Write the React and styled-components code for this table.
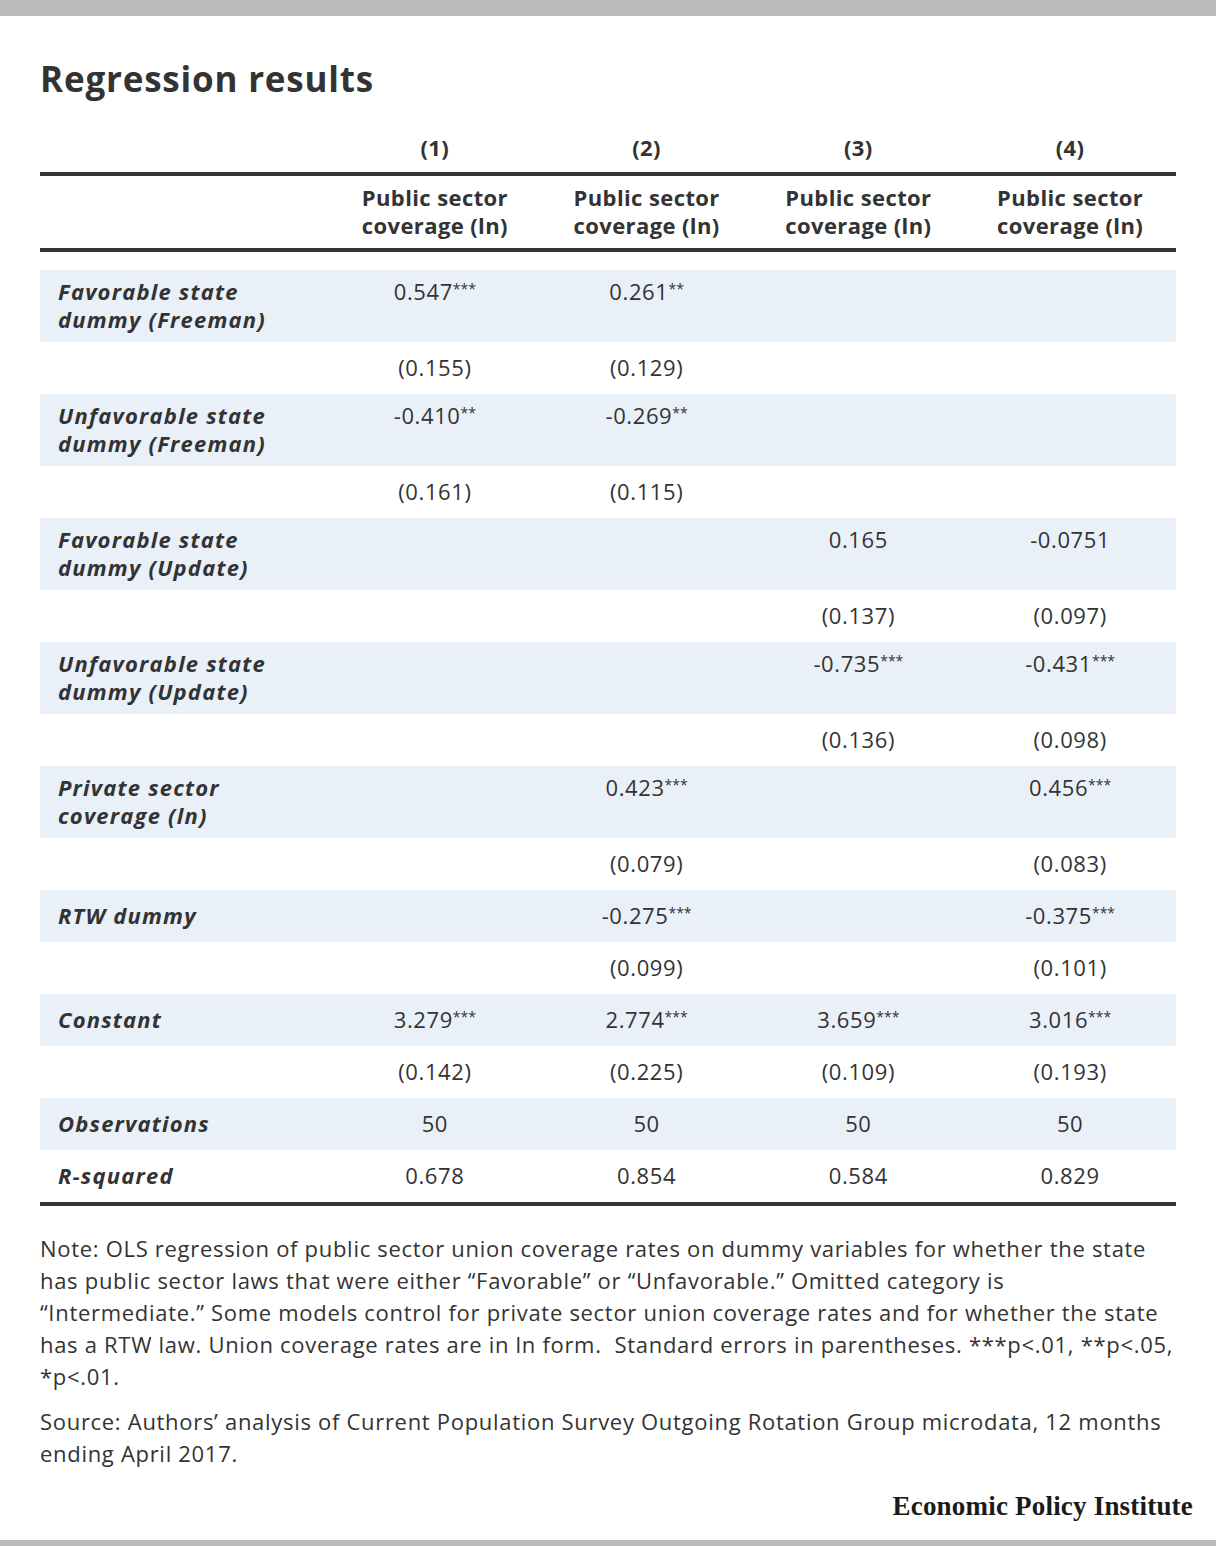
import React from 'react';
import styled, { createGlobalStyle } from 'styled-components';

const GlobalStyle = createGlobalStyle`
  html, body {
    margin: 0;
    padding: 0;
    background: #fff;
  }
  body {
    font-family: "Open Sans", Lato, "Liberation Sans", sans-serif;
    color: #333;
  }
`;

const COLUMNS = ['(1)', '(2)', '(3)', '(4)'];

const ROWS = [
  { label: ['Favorable state', 'dummy (Freeman)'], values: ['0.547***', '0.261**', '', ''], se: ['(0.155)', '(0.129)', '', ''] },
  { label: ['Unfavorable state', 'dummy (Freeman)'], values: ['-0.410**', '-0.269**', '', ''], se: ['(0.161)', '(0.115)', '', ''] },
  { label: ['Favorable state', 'dummy (Update)'], values: ['', '', '0.165', '-0.0751'], se: ['', '', '(0.137)', '(0.097)'] },
  { label: ['Unfavorable state', 'dummy (Update)'], values: ['', '', '-0.735***', '-0.431***'], se: ['', '', '(0.136)', '(0.098)'] },
  { label: ['Private sector', 'coverage (ln)'], values: ['', '0.423***', '', '0.456***'], se: ['', '(0.079)', '', '(0.083)'] },
  { label: ['RTW dummy'], values: ['', '-0.275***', '', '-0.375***'], se: ['', '(0.099)', '', '(0.101)'] },
  { label: ['Constant'], values: ['3.279***', '2.774***', '3.659***', '3.016***'], se: ['(0.142)', '(0.225)', '(0.109)', '(0.193)'] },
];

const STATS = [
  { label: 'Observations', values: ['50', '50', '50', '50'] },
  { label: 'R-squared', values: ['0.678', '0.854', '0.584', '0.829'] },
];

const NOTE_LINES = [
  'Note: OLS regression of public sector union coverage rates on dummy variables for whether the state',
  'has public sector laws that were either “Favorable” or “Unfavorable.” Omitted category is',
  '“Intermediate.” Some models control for private sector union coverage rates and for whether the state',
  'has a RTW law. Union coverage rates are in ln form.\u00a0 Standard errors in parentheses. ***p<.01, **p<.05,',
  '*p<.01.',
];

const SOURCE_LINES = [
  'Source: Authors’ analysis of Current Population Survey Outgoing Rotation Group microdata, 12 months',
  'ending April 2017.',
];

// split "0.547***" into number and stars
const Num = ({ text }) => {
  const m = text.match(/^(.*?)(\**)$/);
  return (
    <>
      {m[1]}
      {m[2] && <Stars>{m[2]}</Stars>}
    </>
  );
};

const Lines = ({ lines }) =>
  lines.map((line, j) => (
    <React.Fragment key={j}>
      {j > 0 && <br />}
      {line}
    </React.Fragment>
  ));

const App = () => {
  let shade = true;
  const bodyRows = [];

  ROWS.forEach((row, i) => {
    const tall = row.label.length > 1;
    bodyRows.push(
      <Row key={`v${i}`} $shade>
        <Label>
          <Lines lines={row.label} />
        </Label>
        {row.values.map((v, j) => (
          <Value key={j} $tall={tall}>
            <Num text={v} />
          </Value>
        ))}
      </Row>
    );
    bodyRows.push(
      <Row key={`s${i}`}>
        <Label />
        {row.se.map((v, j) => (
          <Value key={j}>{v}</Value>
        ))}
      </Row>
    );
  });

  STATS.forEach((row, i) => {
    bodyRows.push(
      <Row key={`st${i}`} $shade={shade}>
        <Label>{row.label}</Label>
        {row.values.map((v, j) => (
          <Value key={j}>{v}</Value>
        ))}
      </Row>
    );
    shade = !shade;
  });

  return (
    <Page>
      <GlobalStyle />
      <Bar $h={16} />
      <Content>
        <Title>Regression results</Title>

        <HeadRow>
          <span />
          {COLUMNS.map((c) => (
            <HeadCell key={c}>{c}</HeadCell>
          ))}
        </HeadRow>
        <HeadRow $second>
          <span />
          {COLUMNS.map((c) => (
            <HeadCell key={c}>
              Public sector
              <br />
              coverage (ln)
            </HeadCell>
          ))}
        </HeadRow>

        <TableBody>{bodyRows}</TableBody>

        <Note>
          <Lines lines={NOTE_LINES} />
        </Note>
        <Note>
          <Lines lines={SOURCE_LINES} />
        </Note>
      </Content>
      <Footer>
        <Brand>Economic Policy Institute</Brand>
      </Footer>
      <Bar $h={6} />
    </Page>
  );
};

const Page = styled.div`
  width: 1216px;
  min-height: 1546px;
  display: flex;
  flex-direction: column;
  background: #fff;
`;

const Bar = styled.div`
  height: ${(p) => p.$h}px;
  background: #bbbbbb;
  flex-shrink: 0;
`;

const Content = styled.div`
  flex: 1;
  padding: 0 40px;
`;

const Title = styled.h1`
  margin: 43px 0 35px;
  font-size: 35px;
  line-height: 40px;
  font-weight: 700;
  color: #333;
  letter-spacing: 0.8px;
`;

const Grid = styled.div`
  display: grid;
  grid-template-columns: 289px repeat(4, 1fr);
`;

const HeadRow = styled(Grid)`
  border-bottom: 4px solid #333;
  padding: ${(p) => (p.$second ? '7px 0 9px' : '0 0 11px')};
  margin-top: ${(p) => (p.$second ? '0' : '-1px')};
`;

const HeadCell = styled.div`
  text-align: center;
  font-size: 22px;
  line-height: 28px;
  font-weight: 700;
  color: #333;
  letter-spacing: 0.4px;
  white-space: nowrap;
`;

const TableBody = styled.div`
  margin-top: 18px;
  border-bottom: 4px solid #333;
`;

const Row = styled(Grid)`
  min-height: 52px;
  align-items: center;
  background: ${(p) => (p.$shade ? '#e9f0f8' : '#fff')};
`;

const Label = styled.div`
  padding: 7px 0 9px 18px;
  font-size: 22px;
  line-height: 28px;
  font-weight: 700;
  font-style: italic;
  color: #333;
  letter-spacing: 1.2px;
  white-space: nowrap;
`;

const Value = styled.div`
  align-self: ${(p) => (p.$tall ? 'start' : 'center')};
  padding: ${(p) => (p.$tall ? '7px 0 0' : '0 0 2px')};
  text-align: center;
  font-size: 22px;
  line-height: 28px;
  color: #333;
  letter-spacing: 0.6px;
  white-space: nowrap;
`;

const Stars = styled.sup`
  font-size: 14px;
  line-height: 0;
  vertical-align: 6px;
  letter-spacing: 0;
`;

const Note = styled.p`
  margin: 26px 0 0;
  font-size: 22px;
  line-height: 32px;
  color: #333;
  letter-spacing: 0.7px;
  white-space: nowrap;

  & + & {
    margin-top: 13px;
  }
`;

const Footer = styled.div`
  display: flex;
  justify-content: flex-end;
  padding: 19px 23px 18px 0;
`;

const Brand = styled.div`
  font-family: "Liberation Serif", "DejaVu Serif", serif;
  font-weight: 700;
  font-size: 27px;
  line-height: 32px;
  color: #1a1a1a;
  letter-spacing: 0.2px;
`;

export default App;
